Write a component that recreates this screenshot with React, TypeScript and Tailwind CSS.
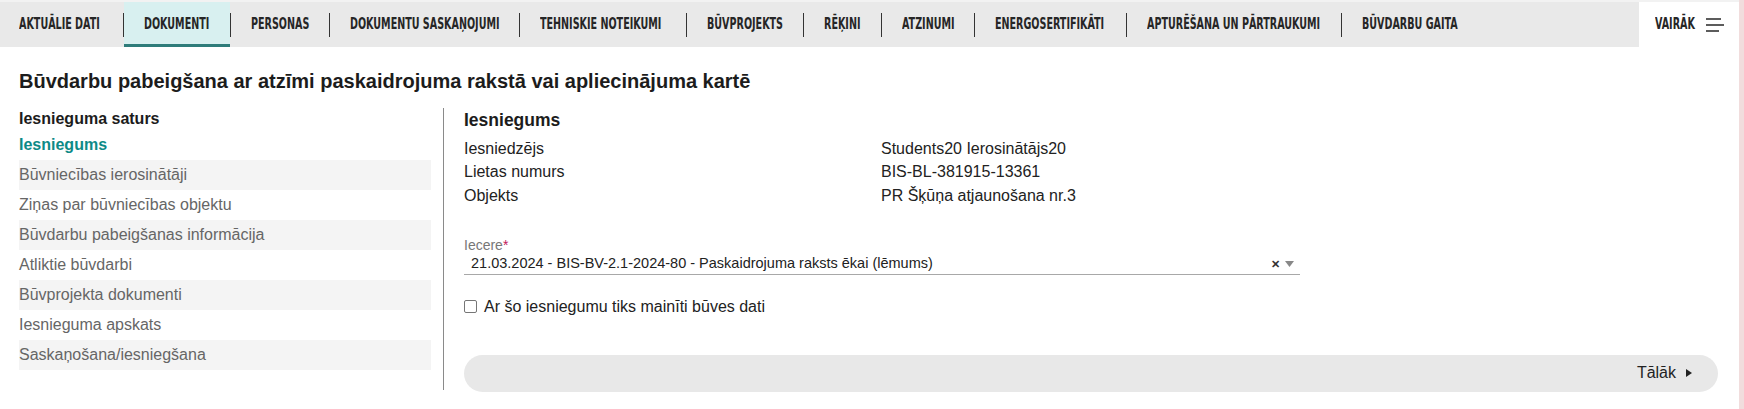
import { useState } from "react";

// label widths measured from the design; the condensed face is squeezed to fit them
const tabs = [
  { label: "Aktuālie dati", w: 84 },
  { label: "Dokumenti", w: 66 },
  { label: "Personas", w: 58 },
  { label: "Dokumentu saskaņojumi", w: 149 },
  { label: "Tehniskie noteikumi", w: 126 },
  { label: "Būvprojekts", w: 76 },
  { label: "Rēķini", w: 37 },
  { label: "Atzinumi", w: 52 },
  { label: "Energosertifikāti", w: 111 },
  { label: "Apturēšana un pārtraukumi", w: 174 },
  { label: "Būvdarbu gaita", w: 96 },
];

const sections = [
  "Iesniegums",
  "Būvniecības ierosinātāji",
  "Ziņas par būvniecības objektu",
  "Būvdarbu pabeigšanas informācija",
  "Atliktie būvdarbi",
  "Būvprojekta dokumenti",
  "Iesnieguma apskats",
  "Saskaņošana/iesniegšana",
];

const details = [
  ["Iesniedzējs", "Students20 Ierosinātājs20"],
  ["Lietas numurs", "BIS-BL-381915-13361"],
  ["Objekts", "PR Šķūņa atjaunošana nr.3"],
];

function Hamburger() {
  return (
    <svg width="19" height="14" viewBox="0 0 19 14" fill="none" stroke="#333" strokeWidth="1.6">
      <line x1="0" y1="1" x2="15" y2="1" />
      <line x1="0" y1="7" x2="18" y2="7" />
      <line x1="0" y1="13" x2="13" y2="13" />
    </svg>
  );
}

function TabLabel({ text, width }: { text: string; width: number }) {
  return (
    <span className="block overflow-visible whitespace-nowrap" style={{ width }}>
      <span className="inline-block origin-left scale-x-[0.71]">{text}</span>
    </span>
  );
}

function TabBar({ active }: { active: string }) {
  return (
    <nav className="flex h-[47px] items-stretch border-t-2 border-[#f2f2f2] bg-[#e9e9e9] font-['DejaVu_Sans_Condensed','DejaVu_Sans',sans-serif] text-[15px] font-bold uppercase text-[#262626]">
      {tabs.map((tab, index) => (
        <div key={tab.label} className="flex items-stretch">
          {index > 0 && <span className="h-[24px] w-px self-center bg-[#333]" />}
          <div
            className={
              tab.label === active
                ? "flex items-center border-b-[3px] border-[#2e7c7a] bg-[#d8f0f0] px-[20px] pt-[3px]"
                : index === 0
                  ? "flex items-center pl-[19px] pr-[20px]"
                  : "flex items-center px-[20px]"
            }
          >
            <TabLabel text={tab.label} width={tab.w} />
          </div>
        </div>
      ))}
      <div className="flex-1" />
      <div className="flex w-[100px] items-center gap-[11px] bg-white pl-[16px]">
        <TabLabel text="Vairāk" width={40} />
        <Hamburger />
      </div>
    </nav>
  );
}

export default function App() {
  const [changes, setChanges] = useState(false);

  return (
    <div className="flex h-[409px] w-[1744px] overflow-hidden bg-white font-['Liberation_Sans',Arial,sans-serif] text-[#1c1c1c]">
      <div className="flex min-w-0 flex-1 flex-col">
        <TabBar active="Dokumenti" />

        <main className="pl-[19px] pr-[21px]">
          <h1 className="mt-[22px] text-[20px] font-bold leading-[24px]">
            Būvdarbu pabeigšana ar atzīmi paskaidrojuma rakstā vai apliecinājuma kartē
          </h1>

          <div className="mt-[15px] flex">
            <aside className="w-[412px]">
              <h2 className="text-[16px] font-bold leading-[22px]">Iesnieguma saturs</h2>
              {sections.map((item, index) => (
                <div
                  key={item}
                  className={
                    index === 0
                      ? "flex h-[30px] items-center text-[16px] font-bold text-[#0d8a87]"
                      : index % 2 === 1
                        ? "flex h-[30px] items-center bg-[#f4f4f4] text-[16px] text-[#666]"
                        : "flex h-[30px] items-center text-[16px] text-[#666]"
                  }
                >
                  {item}
                </div>
              ))}
            </aside>

            <div className="ml-[12px] h-[282px] w-px bg-[#8a8a8a]" />

            <section className="flex-1 pl-[20px]">
              <h2 className="text-[17.5px] font-bold leading-[24px]">Iesniegums</h2>
              <div className="mt-[5px]">
                {details.map(([label, value]) => (
                  <div key={label} className="flex text-[16px] leading-[23.3px] text-[#222]">
                    <span className="w-[417px]">{label}</span>
                    <span>{value}</span>
                  </div>
                ))}
              </div>

              <div className="mt-[29px] w-[836px]">
                <label className="block text-[14px] leading-[18px] text-[#777]">
                  Iecere<span className="text-[#c2185b]">*</span>
                </label>
                <div className="flex h-[21px] items-center border-b border-[#a8a8a8] pl-[7px] text-[14.5px] text-[#222]">
                  <span className="flex-1">21.03.2024 - BIS-BV-2.1-2024-80 - Paskaidrojuma raksts ēkai (lēmums)</span>
                  <span className="mr-[5px] text-[11px] font-bold text-[#333]">✕</span>
                  <svg width="9" height="6" viewBox="0 0 9 6" className="mr-[6px]">
                    <path d="M0 0h9L4.5 6z" fill="#888" />
                  </svg>
                </div>
              </div>

              <label className="mt-[20px] flex items-center gap-[7px] text-[16px] text-[#222]">
                <input
                  type="checkbox"
                  checked={changes}
                  onChange={(event) => setChanges(event.target.checked)}
                  className="h-[13px] w-[13px] appearance-none rounded-[2px] border border-[#767676] bg-white"
                />
                Ar šo iesniegumu tiks mainīti būves dati
              </label>

              <div className="mt-[36px] flex h-[37px] items-center justify-end rounded-full bg-[#e8e8e8] pr-[26px] text-[16px] text-[#222]">
                <span>Tālāk</span>
                <svg width="6" height="8" viewBox="0 0 6 8" className="ml-[10px]">
                  <path d="M0 0l6 4-6 4z" fill="#222" />
                </svg>
              </div>
            </section>
          </div>
        </main>
      </div>
      <div className="w-[5px] bg-[#f1dddd]" />
    </div>
  );
}
